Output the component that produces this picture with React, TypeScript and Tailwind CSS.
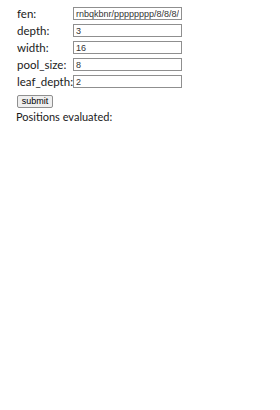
import { useState } from "react";

const fields: [string, string][] = [
  ["fen", "rnbqkbnr/pppppppp/8/8/8/8/PPPPPPPP/RNBQKBNR w KQkq - 0 1"],
  ["depth", "3"],
  ["width", "16"],
  ["pool_size", "8"],
  ["leaf_depth", "2"],
];

export default function App() {
  const [values, setValues] = useState<Record<string, string>>(
    Object.fromEntries(fields)
  );

  return (
    <div className="min-h-[410px] w-[280px] bg-white pl-4 pt-[7px] font-['Lato',sans-serif] text-[11.5px] text-[#1a1a1a]">
      <form onSubmit={(e) => e.preventDefault()}>
        <div className="grid grid-cols-[57px_109px] gap-y-[4px]">
          {fields.map(([name]) => (
            <div key={name} className="contents">
              <label className="flex h-[13px] items-center whitespace-nowrap pl-[1px] leading-none">{name}:</label>
              <input
                value={values[name]}
                onChange={(e) => setValues({ ...values, [name]: e.target.value })}
                className="h-[13px] w-[109px] border border-[#8f8f8f] bg-white px-[2px] font-['Liberation_Sans',sans-serif] text-[9px] leading-none text-[#333] outline-none"
              />
            </div>
          ))}
        </div>
        <button
          type="submit"
          className="ml-[1px] mt-[7px] h-[13px] w-[36px] rounded-[2px] border border-[#8f8f8f] bg-[#efefef] font-['Liberation_Sans',sans-serif] text-[9px] leading-none text-black"
        >
          submit
        </button>
      </form>
      <div className="mt-[1px] text-[11px] leading-[16px]">Positions evaluated:</div>
    </div>
  );
}
